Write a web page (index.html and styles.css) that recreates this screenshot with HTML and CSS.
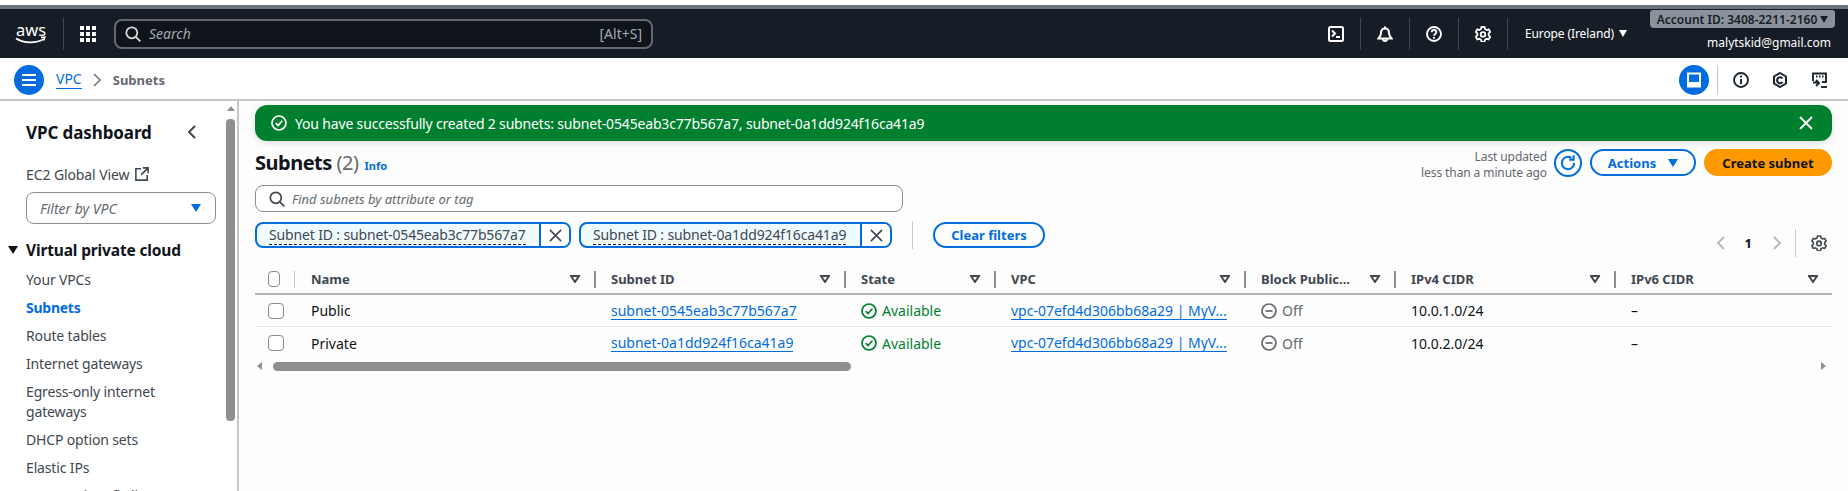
FILE: index.html
```html
<!DOCTYPE html>
<html lang="en">
<head>
<meta charset="utf-8">
<title>Subnets | VPC Console</title>
<link rel="stylesheet" href="styles.css">
</head>
<body>
<div class="chrome-strip"></div>
<header class="topnav">
  <svg class="aws-logo" viewBox="0 0 32 34" width="32" height="34">
    <text x="1" y="19" class="aws-word" textLength="30" lengthAdjust="spacingAndGlyphs">aws</text>
    <path d="M1 21.500c8 5 20 5 28 .5" fill="none" stroke="#fff" stroke-width="1.800"/>
    <path d="M26 20.500l4-.5-1.200 3.500" fill="none" stroke="#fff" stroke-width="1.300"/>
  </svg>
  <span class="nav-div first"></span>
  <svg class="apps" viewBox="0 0 16 16" width="16" height="16" fill="#fff">
    <rect x="0" y="0" width="4" height="4"/><rect x="6" y="0" width="4" height="4"/><rect x="12" y="0" width="4" height="4"/>
    <rect x="0" y="6" width="4" height="4"/><rect x="6" y="6" width="4" height="4"/><rect x="12" y="6" width="4" height="4"/>
    <rect x="0" y="12" width="4" height="4"/><rect x="6" y="12" width="4" height="4"/><rect x="12" y="12" width="4" height="4"/>
  </svg>
  <div class="top-search">
    <svg viewBox="0 0 16 16" width="16" height="16" fill="none" stroke="#d5dbdb" stroke-width="1.800"><circle cx="6.800" cy="6.800" r="5.500"/><path d="M10.800 10.800l4.500 4.500"/></svg>
    <span class="top-search-ph">Search</span>
    <span class="top-search-key">[Alt+S]</span>
  </div>
  <div class="nav-right">
    <svg class="nav-ico" viewBox="0 0 16 16" width="16" height="16" fill="none" stroke="#fff" stroke-width="2"><rect x="1" y="1" width="14" height="14" rx="1.500"/><path d="M4 4.500l3 3-3 3M8 11h4"/></svg>
    <span class="nav-div"></span>
    <svg class="nav-ico" viewBox="0 0 16 16" width="16" height="16" fill="none" stroke="#fff" stroke-width="2"><path d="M1.500 12.500h13c-1.500-1.500-2.500-2.500-2.500-5.500 0-2.500-1.500-4.500-4-4.500S4 4.500 4 7c0 3-1 4-2.500 5.500zM8 .5v2M6 13c0 2.500 4 2.500 4 0"/></svg>
    <span class="nav-div"></span>
    <svg class="nav-ico" viewBox="0 0 16 16" width="16" height="16" fill="none" stroke="#fff" stroke-width="1.900"><circle cx="8" cy="8" r="7"/><path d="M5.800 6.200c0-3 4.500-3 4.500 0 0 1.800-2.300 1.800-2.300 3.600"/><path d="M8 11v1.800"/></svg>
    <span class="nav-div"></span>
    <svg class="nav-ico" viewBox="0 0 16 16" width="16" height="16" fill="none" stroke="#fff" stroke-width="1.800"><path d="M6.500 1h3l.5 2 1.700 1 2-.6 1.500 2.600-1.500 1.400v2l1.500 1.400-1.500 2.600-2-.6-1.700 1-.5 2h-3l-.5-2-1.700-1-2 .6L.8 10.800l1.500-1.400v-2L.8 6l1.500-2.600 2 .6 1.700-1z"/><circle cx="8" cy="8.400" r="2.300"/></svg>
    <span class="nav-div"></span>
    <span class="region">Europe (Ireland)<i class="caret-white"></i></span>
    <div class="account">
      <span class="account-id">Account ID: 3408-2211-2160<i class="caret-dark"></i></span>
      <span class="account-mail">malytskid@gmail.com</span>
    </div>
  </div>
</header>
<div class="crumbbar">
  <span class="round-btn">
    <svg viewBox="0 0 16 16" width="16" height="16" stroke="#fff" stroke-width="2"><path d="M1 3h14M1 8h14M1 13h14"/></svg>
  </span>
  <a class="crumb-link">VPC</a>
  <svg class="crumb-sep" viewBox="0 0 10 14" width="10" height="14" fill="none" stroke="#6b7280" stroke-width="1.500"><path d="M2 1l6 6-6 6"/></svg>
  <span class="crumb-cur">Subnets</span>
  <div class="crumb-tools">
    <span class="round-btn tool-active">
      <svg viewBox="0 0 16 16" width="16" height="16" fill="none" stroke="#fff" stroke-width="2"><rect x="2" y="1.500" width="12" height="13"/><rect x="3" y="10" width="10" height="4" fill="#fff" stroke="none"/></svg>
    </span>
    <span class="tool-div"></span>
    <svg class="tool" viewBox="0 0 16 16" width="16" height="16" fill="none" stroke="#1d2530" stroke-width="1.900"><circle cx="8" cy="8" r="7"/><path d="M8 7v5M8 3.500V5.500"/></svg>
    <svg class="tool" viewBox="0 0 16 16" width="16" height="16" fill="none" stroke="#1d2530" stroke-width="2"><path d="M8 1l6 3.500v7L8 15l-6-3.500v-7z"/><path d="M10.500 6.500A3 3 0 1 0 10.500 10"/></svg>
    <svg class="tool" viewBox="0 0 16 16" width="16" height="16" fill="none" stroke="#1d2530" stroke-width="1.900"><path d="M2 9V1.500h13V10h-4"/><path d="M5 4.500h1.500M8 4.500h1.500M11 4.500h1.500"/><path d="M2 10.500h5M5 8l3 3-3 3"/><path d="M10 15h6"/></svg>
  </div>
</div>
<div class="shell">
  <aside class="sidenav">
    <div class="side-inner">
      <div class="side-title"><span>VPC dashboard</span>
        <svg viewBox="0 0 10 14" width="10" height="14" fill="none" stroke="#414750" stroke-width="2"><path d="M8 1L2 7l6 6"/></svg>
      </div>
      <div class="side-ec2">EC2 Global View
        <svg viewBox="0 0 16 16" width="14" height="14" fill="none" stroke="#414750" stroke-width="1.800"><path d="M7 2H1v13h13V9M9 1h6v6M15 1L7 9"/></svg>
      </div>
      <div class="side-filter"><span>Filter by VPC</span><i class="caret-blue"></i></div>
      <div class="side-section"><i class="caret-black"></i>Virtual private cloud</div>
      <ul class="side-list">
        <li>Your VPCs</li>
        <li class="active">Subnets</li>
        <li>Route tables</li>
        <li>Internet gateways</li>
        <li>Egress-only internet gateways</li>
        <li>DHCP option sets</li>
        <li>Elastic IPs</li>
        <li>Managed prefix lists</li>
      </ul>
    </div>
    <div class="side-scroll">
      <i class="sb-up"></i>
      <div class="sb-thumb"></div>
    </div>
  </aside>
  <main class="content">
    <div class="flash">
      <svg viewBox="0 0 16 16" width="16" height="16" fill="none" stroke="#fff" stroke-width="1.700"><circle cx="8" cy="8" r="7"/><path d="M4.800 8.200l2.300 2.300 4.200-4.700"/></svg>
      <span class="flash-text">You have successfully created 2 subnets: subnet-0545eab3c77b567a7, subnet-0a1dd924f16ca41a9</span>
      <svg class="flash-x" viewBox="0 0 16 16" width="16" height="16" fill="none" stroke="#fff" stroke-width="1.800"><path d="M2 2l12 12M14 2L2 14"/></svg>
    </div>
    <div class="head-row">
      <div class="head-left">
        <h1>Subnets <span class="count">(2)</span></h1>
        <a class="info">Info</a>
      </div>
      <div class="head-right">
        <div class="updated"><span>Last updated</span><span>less than a minute ago</span></div>
        <span class="refresh">
          <svg viewBox="0 0 16 16" width="18" height="18" fill="none" stroke="#006ce0" stroke-width="1.800"><path d="M13.500 8A5.500 5.500 0 1 1 11 3.400"/><path d="M13 1v4H9" /></svg>
        </span>
        <span class="btn btn-normal">Actions<i class="caret-blue"></i></span>
        <span class="btn btn-primary">Create subnet</span>
      </div>
    </div>
    <div class="filter-input">
      <svg viewBox="0 0 16 16" width="16" height="16" fill="none" stroke="#414750" stroke-width="1.700"><circle cx="6.800" cy="6.800" r="5.500"/><path d="M10.800 10.800l4.500 4.500"/></svg>
      <span>Find subnets by attribute or tag</span>
    </div>
    <div class="token-row">
      <div class="token t1"><span class="token-label"><span class="dashed">Subnet ID : subnet-0545eab3c77b567a7</span></span><span class="token-x"><svg viewBox="0 0 16 16" width="15" height="15" fill="none" stroke="#414750" stroke-width="1.700"><path d="M2 2l12 12M14 2L2 14"/></svg></span></div>
      <div class="token t2"><span class="token-label"><span class="dashed">Subnet ID : subnet-0a1dd924f16ca41a9</span></span><span class="token-x"><svg viewBox="0 0 16 16" width="15" height="15" fill="none" stroke="#414750" stroke-width="1.700"><path d="M2 2l12 12M14 2L2 14"/></svg></span></div>
      <span class="token-div"></span>
      <span class="btn btn-normal btn-clear">Clear filters</span>
    </div>
    <div class="pager">
      <svg viewBox="0 0 10 14" width="10" height="14" fill="none" stroke="#b4b4bb" stroke-width="1.800"><path d="M8 1L2 7l6 6"/></svg>
      <span class="page-num">1</span>
      <svg viewBox="0 0 10 14" width="10" height="14" fill="none" stroke="#b4b4bb" stroke-width="1.800"><path d="M2 1l6 6-6 6"/></svg>
      <span class="pager-div"></span>
      <svg viewBox="0 0 16 16" width="16" height="16" fill="none" stroke="#414750" stroke-width="1.600"><path d="M6.500 1h3l.5 2 1.700 1 2-.6 1.500 2.600-1.500 1.400v2l1.500 1.400-1.500 2.600-2-.6-1.700 1-.5 2h-3l-.5-2-1.700-1-2 .6L.8 10.800l1.500-1.400v-2L.8 6l1.500-2.600 2 .6 1.700-1z"/><circle cx="8" cy="8.400" r="2.300"/></svg>
    </div>
    <div class="table">
      <div class="tr th">
        <div class="td cb"><i class="check"></i></div>
        <div class="td"><span class="th-text">Name</span><svg class="sort" viewBox="0 0 10 8" width="10" height="8"><path d="M1 1h8L5 7z"/></svg></div>
        <div class="td"><span class="th-text">Subnet ID</span><svg class="sort" viewBox="0 0 10 8" width="10" height="8"><path d="M1 1h8L5 7z"/></svg></div>
        <div class="td"><span class="th-text">State</span><svg class="sort" viewBox="0 0 10 8" width="10" height="8"><path d="M1 1h8L5 7z"/></svg></div>
        <div class="td"><span class="th-text">VPC</span><svg class="sort" viewBox="0 0 10 8" width="10" height="8"><path d="M1 1h8L5 7z"/></svg></div>
        <div class="td"><span class="th-text">Block Public...</span><svg class="sort" viewBox="0 0 10 8" width="10" height="8"><path d="M1 1h8L5 7z"/></svg></div>
        <div class="td"><span class="th-text">IPv4 CIDR</span><svg class="sort" viewBox="0 0 10 8" width="10" height="8"><path d="M1 1h8L5 7z"/></svg></div>
        <div class="td"><span class="th-text">IPv6 CIDR</span><svg class="sort" viewBox="0 0 10 8" width="10" height="8"><path d="M1 1h8L5 7z"/></svg></div>
      </div>
      <div class="tr row">
        <div class="td cb"><i class="check"></i></div>
        <div class="td">Public</div>
        <div class="td"><a class="link">subnet-0545eab3c77b567a7</a></div>
        <div class="td ok"><svg viewBox="0 0 16 16" width="16" height="16" fill="none" stroke="#00802f" stroke-width="1.700"><circle cx="8" cy="8" r="7"/><path d="M4.800 8.200l2.300 2.300 4.200-4.700"/></svg>Available</div>
        <div class="td"><a class="link">vpc-07efd4d306bb68a29 | MyV...</a></div>
        <div class="td off"><svg viewBox="0 0 16 16" width="16" height="16" fill="none" stroke="#656871" stroke-width="1.700"><circle cx="8" cy="8" r="7"/><path d="M4.500 8h7"/></svg>Off</div>
        <div class="td">10.0.1.0/24</div>
        <div class="td">–</div>
      </div>
      <div class="tr row">
        <div class="td cb"><i class="check"></i></div>
        <div class="td">Private</div>
        <div class="td"><a class="link">subnet-0a1dd924f16ca41a9</a></div>
        <div class="td ok"><svg viewBox="0 0 16 16" width="16" height="16" fill="none" stroke="#00802f" stroke-width="1.700"><circle cx="8" cy="8" r="7"/><path d="M4.800 8.200l2.300 2.300 4.200-4.700"/></svg>Available</div>
        <div class="td"><a class="link">vpc-07efd4d306bb68a29 | MyV...</a></div>
        <div class="td off"><svg viewBox="0 0 16 16" width="16" height="16" fill="none" stroke="#656871" stroke-width="1.700"><circle cx="8" cy="8" r="7"/><path d="M4.500 8h7"/></svg>Off</div>
        <div class="td">10.0.2.0/24</div>
        <div class="td">–</div>
      </div>
    </div>
    <div class="hscroll">
      <i class="sb-left"></i>
      <div class="hthumb"></div>
      <i class="sb-right"></i>
    </div>
  </main>
</div>
</body>
</html>
```
FILE: styles.css
```css
* { box-sizing: border-box; }
html, body { margin: 0; height: 491px; overflow: hidden; }
body { font-family: "Noto Sans", sans-serif; font-size: 14px; color: #0f141a; background: #fff; display: flex; flex-direction: column; }
i { display: block; font-style: normal; }
a { text-decoration: none; }
ul { list-style: none; margin: 0; padding: 0; }
h1 { margin: 0; }

.chrome-strip { height: 9px; border-top: 5px solid #fff; background: #6d737c; flex: none; }

.topnav { height: 49px; flex: none; background: #161d26; display: flex; align-items: center; padding-left: 15px; color: #fff; position: relative; }
.aws-logo { flex: none; margin-right: 16px; }
.aws-word { font-family: "Noto Sans", sans-serif; font-size: 17px; fill: #fff; }
.nav-div { width: 1px; height: 32px; background: #414750; flex: none; }
.nav-div.first { margin-right: 16px; }
.apps { flex: none; margin-right: 18px; }
.top-search { width: 539px; height: 30px; flex: none; border: 2px solid #656871; border-radius: 8px; background: #0f141a; display: flex; align-items: center; padding: 0 9px; gap: 8px; }
.top-search-ph { font-style: italic; font-size: 14px; color: #a4a9b2; }
.top-search-key { margin-left: auto; font-size: 14px; color: #a4a9b2; }
.nav-right { margin-left: auto; display: flex; align-items: center; height: 100%; }
.nav-ico { margin: 0 16px; flex: none; }
.region { font-size: 12px; letter-spacing: -.1px; margin: 0 23px 0 17px; display: flex; align-items: center; gap: 5px; white-space: nowrap; color: #fff; }
.caret-white { border: 4.500px solid transparent; border-top: 7px solid #fff; border-bottom: 0; }
.account { width: 198px; flex: none; display: flex; flex-direction: column; align-items: flex-end; align-self: flex-start; padding-right: 17px; margin-top: 1px; }
.account-id { background: #8c929c; color: #161d26; height: 18px; width: 185px; border-radius: 3px 3px 4px 4px; font-size: 12px; font-weight: 600; display: flex; align-items: center; justify-content: center; gap: 3px; margin-right: -4px; white-space: nowrap; }
.caret-dark { border: 4px solid transparent; border-top: 7px solid #161d26; border-bottom: 0; }
.account-mail { font-size: 12px; margin-top: 6px; }

.crumbbar { height: 43px; flex: none; border-bottom: 2px solid #c6c6cd; display: flex; align-items: center; padding: 2px 14px 0; background: #fff; }
.round-btn { width: 30px; height: 30px; border-radius: 50%; background: #006ce0; display: flex; align-items: center; justify-content: center; flex: none; }
.crumb-link { color: #006ce0; font-size: 14px; margin-left: 12px; border-bottom: 1px solid #006ce0; line-height: 18px; }
.crumb-sep { margin: 0 11px 0 10px; }
.crumb-cur { color: #656871; font-weight: 700; font-size: 13px; }
.crumb-tools { margin-left: auto; display: flex; align-items: center; }
.tool-div { width: 1px; height: 30px; background: #c6c6cd; margin: 0 15px 0 8px; }
.tool { margin-right: 23px; }
.tool:last-child { margin-right: 7px; }

.shell { flex: 1; display: flex; min-height: 0; }

.sidenav { width: 239px; flex: none; border-right: 2px solid #c6c6cd; display: flex; overflow: hidden; background: #fff; }
.side-inner { width: 226px; padding: 19px 0 0 26px; flex: none; }
.side-title { display: flex; align-items: center; justify-content: space-between; font-size: 17px; font-weight: 700; letter-spacing: -.1px; height: 24px; padding-right: 29px; }
.side-ec2 { display: flex; align-items: center; gap: 6px; margin-top: 20px; height: 20px; color: #414750; letter-spacing: -.1px; }
.side-filter { margin-top: 8px; width: 190px; height: 32px; border: 1px solid #8c8c94; border-radius: 8px; display: flex; align-items: center; justify-content: space-between; padding: 0 14px 0 13px; font-style: italic; color: #656871; }
.caret-blue { border: 5.500px solid transparent; border-top: 8px solid #006ce0; border-bottom: 0; }
.side-section { position: relative; margin-top: 14px; font-size: 15.500px; font-weight: 700; letter-spacing: -.15px; height: 24px; line-height: 24px; }
.caret-black { position: absolute; left: -18px; top: 8px; border: 5px solid transparent; border-top: 8px solid #0f141a; border-bottom: 0; }
.side-list { margin-top: 4px; color: #414750; letter-spacing: -.15px; padding-right: 30px; }
.side-list li { padding: 4px 0; line-height: 20px; }
.side-list li.active { color: #006ce0; font-weight: 700; letter-spacing: -.25px; }
.side-scroll { width: 11px; flex: none; position: relative; padding-top: 18px; }
.sb-up { position: absolute; top: 5px; left: 1px; border: 4.500px solid transparent; border-bottom: 5px solid #8f8f8f; border-top: 0; }
.sb-thumb { width: 9px; height: 302px; background: #8f8f8f; border-radius: 4px; }

.content { flex: 1; min-width: 0; background: #fdfdfd; padding: 4px 16px 0 16px; }
.flash { height: 36px; background: #00802f; border-radius: 12px; color: #fff; display: flex; align-items: center; padding: 0 18px 0 16px; gap: 8px; box-shadow: 0 2px 6px rgba(0,0,0,.12); }
.flash-text { font-size: 14px; letter-spacing: -.17px; }
.flash-x { margin-left: auto; }
.head-row { display: flex; justify-content: space-between; height: 35px; margin-top: 8px; }
.head-left { display: flex; align-items: baseline; gap: 6px; }
.head-left h1 { font-size: 20px; font-weight: 700; line-height: 28px; letter-spacing: -.5px; }
.count { font-weight: 400; color: #656871; }
.info { color: #006ce0; font-size: 11px; font-weight: 700; }
.head-right { display: flex; align-items: flex-start; }
.updated { display: flex; flex-direction: column; align-items: flex-end; color: #656871; font-size: 12px; letter-spacing: -.1px; line-height: 16px; }
.refresh { width: 28px; height: 28px; border: 2px solid #006ce0; border-radius: 50%; display: flex; align-items: center; justify-content: center; margin: 0 8px 0 7px; }
.btn { height: 27px; border-radius: 14px; display: inline-flex; align-items: center; justify-content: center; font-weight: 700; font-size: 13px; white-space: nowrap; }
.btn-normal { border: 2px solid #006ce0; color: #006ce0; width: 106px; gap: 12px; }
.btn-primary { background: #ff9900; color: #0f141a; width: 128px; margin-left: 8px; }
.filter-input { width: 648px; height: 27px; margin-top: 1px; border: 1px solid #8c8c94; border-radius: 8px; display: flex; align-items: center; gap: 7px; padding: 0 13px; font-size: 13px; font-style: italic; color: #656871; background: #fff; }
.token-row { display: flex; align-items: center; margin-top: 10px; height: 26px; }
.token { display: flex; height: 26px; border: 2px solid #006ce0; border-radius: 8px; background: #f0fbff; overflow: hidden; }
.t1 { width: 316px; }
.t2 { width: 313px; margin-left: 8px; }
.token-label { flex: 1; padding-left: 12px; font-size: 14px; letter-spacing: -.15px; color: #414750; white-space: nowrap; line-height: 21px; }
.dashed { border-bottom: 1px dashed #0f141a; display: inline-block; line-height: 19px; }
.token-x { width: 30px; border-left: 2px solid #006ce0; background: #fff; display: flex; align-items: center; justify-content: center; flex: none; }
.token-div { width: 1px; height: 28px; background: #c6c6cd; margin: 0 20px 0 20px; }
.btn-clear { width: 112px; height: 26px; }
.pager { display: flex; align-items: center; justify-content: flex-end; height: 28px; margin-top: -19px; margin-right: 5px; }
.page-num { font-weight: 700; font-size: 13px; margin: 0 20px 0 19px; }
.pager-div { width: 1px; height: 28px; background: #c6c6cd; margin: 0 15px 0 13px; }
.table { margin-top: 8px; }
.tr { display: grid; grid-template-columns: 39px 300px 250px 150px 250px 150px 220px 218px; align-items: center; }
.th { height: 30px; border-bottom: 2px solid #b4b4bb; color: #414750; font-weight: 700; font-size: 13px; }
.row { height: 32px; border-bottom: 1px solid #e8e8ec; font-size: 14px; color: #0f141a; }
.row:last-child { border-bottom: 0; }
.td { padding-left: 17px; display: flex; align-items: center; position: relative; white-space: nowrap; height: 100%; }
.th .td { padding-right: 14px; justify-content: space-between; }
.th .td::before { content: ""; position: absolute; left: 0; top: 6px; width: 2px; height: 17px; background: #8c8c94; }
.th .td.cb::before { display: none; }
.th .td:nth-child(2)::before { width: 1px; background: #c6c6cd; }
.td.cb { padding-left: 13px; }
.check { width: 16px; height: 16px; border: 1px solid #8c8c94; border-radius: 4px; background: #fff; }
.sort { fill: none; stroke: #414750; stroke-width: 2; flex: none; }
.link { color: #006ce0; border-bottom: 1px solid #006ce0; line-height: 17px; }
.ok { color: #00802f; gap: 5px; }
.off { color: #656871; gap: 5px; }
.hscroll { height: 9px; margin-top: 3px; position: relative; }
.hthumb { position: absolute; left: 18px; width: 578px; height: 9px; border-radius: 5px; background: #8f8f8f; }
.sb-left { position: absolute; left: 2px; top: 0; border: 4px solid transparent; border-right: 5px solid #8f8f8f; border-left: 0; }
.sb-right { position: absolute; right: 6px; top: 0; border: 4px solid transparent; border-left: 5px solid #8f8f8f; border-right: 0; }
```
